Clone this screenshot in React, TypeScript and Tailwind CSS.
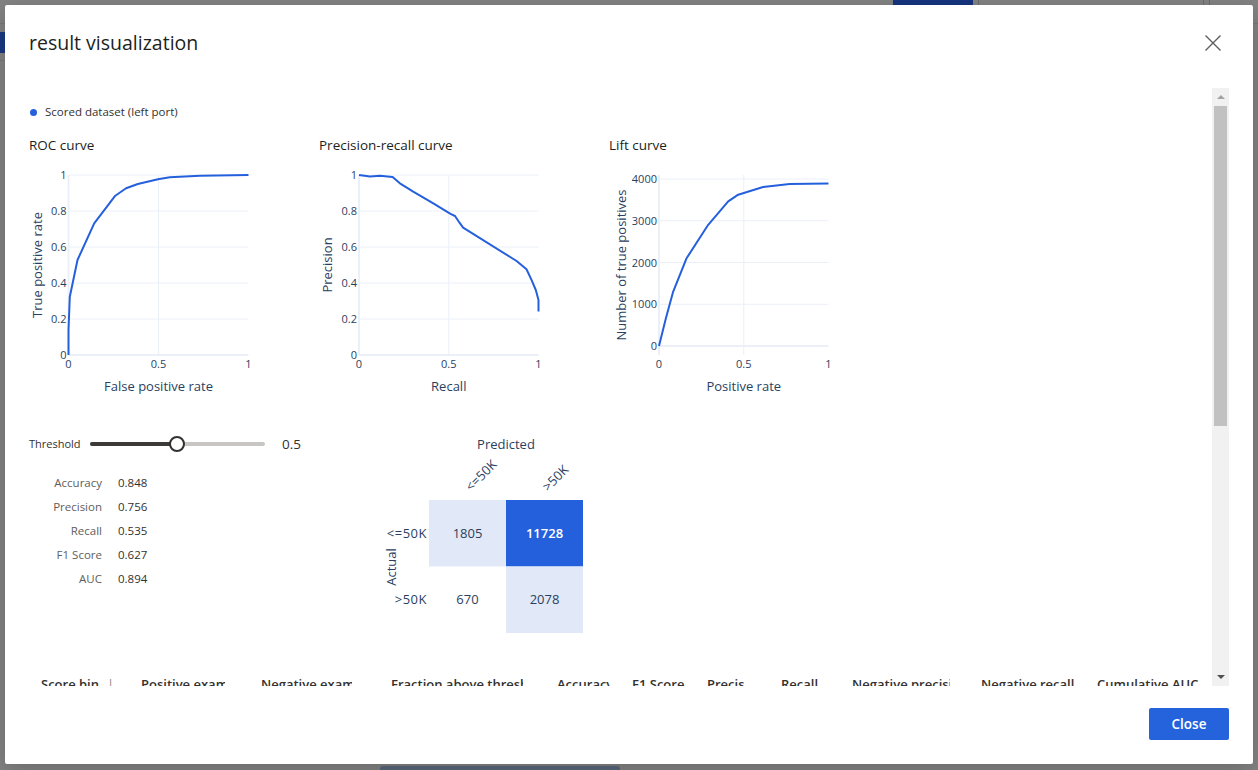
import React from "react";

type Pt = [number, number];

const roc: Pt[] = [
  [0, 0], [0, 0.139], [0.007, 0.324], [0.05, 0.528], [0.143, 0.731], [0.26, 0.885],
  [0.32, 0.926], [0.385, 0.95], [0.497, 0.976], [0.562, 0.987], [0.73, 0.996], [1, 1],
];

const pr: Pt[] = [
  [0, 1], [0.061, 0.991], [0.117, 0.996], [0.187, 0.989], [0.228, 0.954], [0.302, 0.907],
  [0.414, 0.843], [0.51, 0.784], [0.535, 0.772], [0.56, 0.735], [0.58, 0.707],
  [0.878, 0.522], [0.933, 0.476], [0.961, 0.417], [0.985, 0.361], [1, 0.306], [1, 0.241],
];

const lift: Pt[] = [
  [0, 0], [0.041, 664], [0.084, 1304], [0.163, 2104], [0.29, 2904], [0.408, 3464],
  [0.467, 3624], [0.614, 3808], [0.771, 3880], [1, 3896],
];

const metrics = [
  ["Accuracy", "0.848"],
  ["Precision", "0.756"],
  ["Recall", "0.535"],
  ["F1 Score", "0.627"],
  ["AUC", "0.894"],
];

const columns: { label: string; w: number; tw: number }[] = [
  { label: "Positive examples", w: 120, tw: 84 },
  { label: "Negative examples", w: 130, tw: 91 },
  { label: "Fraction above threshold", w: 166, tw: 132 },
  { label: "Accuracy", w: 75, tw: 53 },
  { label: "F1 Score", w: 75, tw: 60 },
  { label: "Precision", w: 74, tw: 37 },
  { label: "Recall", w: 71, tw: 60 },
  { label: "Negative precision", w: 129, tw: 98 },
  { label: "Negative recall", w: 116, tw: 100 },
  { label: "Cumulative AUC", w: 110, tw: 110 },
];

const TICK = "#2a3f5f";
const GRID = "#ebf0f8";
const LINE = "#2560dc";

function LineChart(props: {
  left: number;
  yMin: number;
  yMax: number;
  yTicks: [number, string][];
  xTitle: string;
  yTitle: string;
  yTitleX: number;
  data: Pt[];
}) {
  const { left, yMin, yMax, yTicks, xTitle, yTitle, yTitleX, data } = props;
  const right = 219.5;
  const top = 21;
  const bottom = 201;
  const sx = (v: number) => left + v * (right - left);
  const sy = (v: number) => bottom - ((v - yMin) / (yMax - yMin)) * (bottom - top);
  const d = data.map(([x, y], i) => `${i ? "L" : "M"}${sx(x).toFixed(1)},${sy(y).toFixed(1)}`).join(" ");

  return (
    <svg width="290" height="246" className="block">
      {yTicks.map(([v]) => (
        <line key={v} x1={left} x2={right} y1={sy(v)} y2={sy(v)} stroke={GRID} strokeWidth={v === 0 ? 2 : 1} />
      ))}
      <line x1={sx(0.5)} x2={sx(0.5)} y1={top} y2={bottom} stroke={GRID} />
      <line x1={sx(0)} x2={sx(0)} y1={top} y2={bottom} stroke={GRID} strokeWidth={2} />
      <path d={d} fill="none" stroke={LINE} strokeWidth={2} strokeLinejoin="round" />
      {yTicks.map(([v, label]) => (
        <text key={label} x={left - 2} y={sy(v) + 4} textAnchor="end" fontSize="11" fill={TICK}>
          {label}
        </text>
      ))}
      {[[0, "0"], [0.5, "0.5"], [1, "1"]].map(([v, label]) => (
        <text key={label as string} x={sx(v as number)} y={214} textAnchor="middle" fontSize="11" fill={TICK}>
          {label}
        </text>
      ))}
      <text x={(left + right) / 2} y={237} textAnchor="middle" fontSize="13" fill={TICK}>
        {xTitle}
      </text>
      <text
        x={yTitleX}
        y={111}
        textAnchor="middle"
        dominantBaseline="central"
        fontSize="13"
        fill={TICK}
        transform={`rotate(-90 ${yTitleX} 111)`}
      >
        {yTitle}
      </text>
    </svg>
  );
}

function ConfusionMatrix() {
  const x0 = 110, x1 = 187, x2 = 264;
  const y0 = 100, y1 = 166.5, y2 = 233;
  return (
    <svg width="290" height="250" className="block">
      <text x={187} y={49} textAnchor="middle" fontSize="13" fill={TICK}>Predicted</text>
      <text x={152} y={92} fontSize="13" fill={TICK} transform="rotate(-45 152 92)">&lt;=50K</text>
      <text x={229} y={92} fontSize="13" fill={TICK} transform="rotate(-45 229 92)">&gt;50K</text>
      <rect x={x0} y={y0} width={x1 - x0} height={y1 - y0} fill="#e1e9f8" />
      <rect x={x1} y={y0} width={x2 - x1} height={y1 - y0} fill="#245fdc" />
      <rect x={x1} y={y1} width={x2 - x1} height={y2 - y1} fill="#e1e9f8" />
      <text x={(x0 + x1) / 2} y={137.5} textAnchor="middle" fontSize="13" fill={TICK}>1805</text>
      <text x={(x1 + x2) / 2} y={137.5} textAnchor="middle" fontSize="13" fontWeight="600" fill="#ffffff">11728</text>
      <text x={(x0 + x1) / 2} y={204} textAnchor="middle" fontSize="13" fill={TICK}>670</text>
      <text x={(x1 + x2) / 2} y={204} textAnchor="middle" fontSize="13" fill={TICK}>2078</text>
      <text x={108} y={137.5} textAnchor="end" fontSize="13" fill={TICK} letterSpacing="0.5">&lt;=50K</text>
      <text x={108} y={204} textAnchor="end" fontSize="13" fill={TICK} letterSpacing="0.5">&gt;50K</text>
      <text
        x={72}
        y={167}
        textAnchor="middle"
        dominantBaseline="central"
        fontSize="13"
        fill={TICK}
        transform="rotate(-90 72 167)"
      >
        Actual
      </text>
    </svg>
  );
}

export default function App() {
  return (
    <div className="relative w-[1258px] h-[770px] overflow-hidden bg-[#838383] font-['Open_Sans',sans-serif]">
      {/* page behind the overlay */}
      <div className="absolute left-0 top-[23px] w-[8px] h-px bg-[#777777]" />
      <div className="absolute left-0 top-[60px] w-[8px] h-px bg-[#777777]" />
      <div className="absolute left-0 top-[32px] w-[5px] h-[21px] bg-[#1a3882]" />
      <div className="absolute left-[893px] top-0 w-[80px] h-[5px] bg-[#15357f]" />
      <div className="absolute left-[978px] top-0 w-px h-[5px] bg-[#6a6a6a]" />
      <div className="absolute left-[1203px] top-0 w-px h-[5px] bg-[#6a6a6a]" />
      <div className="absolute left-[1209px] top-0 w-px h-[5px] bg-[#6a6a6a]" />
      <div className="absolute left-[1253px] top-[23px] w-[5px] h-px bg-[#777777]" />
      <div className="absolute left-[380px] top-[766px] w-[240px] h-[6px] rounded-t-[3px] bg-[#5a687c]" />

      {/* dialog */}
      <div className="absolute left-[5px] top-[5px] w-[1248px] h-[759px] bg-white rounded-[2px] shadow-[0_6px_24px_rgba(0,0,0,0.2)] flex flex-col">
        <div className="h-[83px] flex justify-between items-start pl-[24px] pr-[32px] pt-[24px]">
          <h1 className="text-[19.5px] leading-[28px] font-medium text-[#201f1e]">result visualization</h1>
          <button className="mt-[6px] w-[16px] h-[16px]">
            <svg width="16" height="16" viewBox="0 0 16 16">
              <path d="M0.5 0.5 L15.5 15.5 M15.5 0.5 L0.5 15.5" stroke="#605e5c" strokeWidth="1.4" />
            </svg>
          </button>
        </div>

        <div className="h-[598px] flex">
          <div className="flex-1 overflow-hidden pl-[24px]">
            {/* legend */}
            <div className="mt-[16px] h-[16px] flex items-center">
              <span className="ml-[1px] w-[7px] h-[7px] rounded-full bg-[#2560dc]" />
              <span className="ml-[8px] text-[11.5px] text-[#323130]">Scored dataset (left port)</span>
            </div>

            {/* curves */}
            <div className="mt-[16px] flex">
              <div className="w-[290px]">
                <div className="h-[18px] text-[13.5px] leading-[18px] text-[#201f1e]">ROC curve</div>
                <LineChart
                  left={39.5}
                  yMin={0}
                  yMax={1}
                  yTicks={[[0, "0"], [0.2, "0.2"], [0.4, "0.4"], [0.6, "0.6"], [0.8, "0.8"], [1, "1"]]}
                  xTitle="False positive rate"
                  yTitle="True positive rate"
                  yTitleX={8}
                  data={roc}
                />
              </div>
              <div className="w-[290px]">
                <div className="h-[18px] text-[13.5px] leading-[18px] text-[#201f1e]">Precision-recall curve</div>
                <LineChart
                  left={40}
                  yMin={0}
                  yMax={1}
                  yTicks={[[0, "0"], [0.2, "0.2"], [0.4, "0.4"], [0.6, "0.6"], [0.8, "0.8"], [1, "1"]]}
                  xTitle="Recall"
                  yTitle="Precision"
                  yTitleX={8}
                  data={pr}
                />
              </div>
              <div className="w-[290px]">
                <div className="h-[18px] text-[13.5px] leading-[18px] text-[#201f1e]">Lift curve</div>
                <LineChart
                  left={50}
                  yMin={-215}
                  yMax={4096}
                  yTicks={[[0, "0"], [1000, "1000"], [2000, "2000"], [3000, "3000"], [4000, "4000"]]}
                  xTitle="Positive rate"
                  yTitle="Number of true positives"
                  yTitleX={12}
                  data={lift}
                />
              </div>
            </div>

            {/* threshold, metrics, confusion matrix */}
            <div className="h-[275px] flex">
              <div className="w-[290px]">
                <div className="mt-[34px] h-[20px] flex items-center">
                  <span className="w-[61px] text-[11px] text-[#323130]">Threshold</span>
                  <div className="relative w-[175px] h-[4px] rounded-full bg-[#c8c6c4]">
                    <div className="h-[4px] w-[87px] rounded-full bg-[#3b3a39]" />
                    <div className="absolute left-[79px] top-[-6px] w-[16px] h-[16px] rounded-full border-2 border-[#323130] bg-white" />
                  </div>
                  <span className="ml-[17px] text-[13.5px] text-[#323130]">0.5</span>
                </div>
                <div className="mt-[17px] flex flex-col">
                  {metrics.map(([label, value]) => (
                    <div key={label} className="h-[24px] flex items-center text-[11.5px]">
                      <span className="w-[73px] text-right text-[#605e5c]">{label}</span>
                      <span className="ml-[16px] text-[#323130]">{value}</span>
                    </div>
                  ))}
                </div>
              </div>
              <ConfusionMatrix />
            </div>

            {/* metrics table header, cut by the scroll area */}
            <div className="h-[24px] flex items-start text-[13px] leading-[18px] font-semibold text-[#323130] whitespace-nowrap">
              <div className="w-[112px] pl-[12px] flex">
                <span className="w-[66px]">Score bin</span>
                <span className="font-normal text-[#8a8886]">|</span>
              </div>
              {columns.map((c) => (
                <div key={c.label} className="shrink-0" style={{ width: c.w }}>
                  <div className="overflow-hidden" style={{ width: c.tw }}>
                    {c.label}
                  </div>
                </div>
              ))}
            </div>
          </div>

          {/* scrollbar */}
          <div className="w-[17px] mr-[24px] bg-[#f1f1f1] flex flex-col items-center">
            <div className="h-[18px] flex items-center justify-center">
              <div className="w-0 h-0 border-l-[4px] border-r-[4px] border-b-[4px] border-l-transparent border-r-transparent border-b-[#a3a3a3]" />
            </div>
            <div className="w-[13px] h-[320px] bg-[#c1c1c1]" />
            <div className="flex-1" />
            <div className="h-[18px] flex items-center justify-center">
              <div className="w-0 h-0 border-l-[4px] border-r-[4px] border-t-[4px] border-l-transparent border-r-transparent border-t-[#505050]" />
            </div>
          </div>
        </div>

        <div className="flex justify-end pt-[22px] pr-[24px]">
          <button className="w-[80px] h-[32px] rounded-[2px] bg-[#2563dc] text-white text-[13.5px] font-semibold">
            Close
          </button>
        </div>
      </div>
    </div>
  );
}
